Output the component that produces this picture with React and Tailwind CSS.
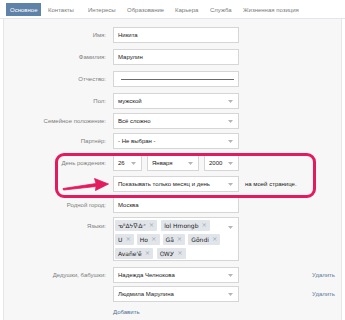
import React from 'react';

const Chevron = () => (
  <svg width="5" height="3" viewBox="0 0 5 3" className="shrink-0">
    <path d="M0 0 L5 0 L2.5 3 Z" fill="#b5b5b5" />
  </svg>
);

const Row = ({ label, className = '', labelClass = 'items-center', labelPad = '', children }) => (
  <div className={`flex ${labelClass} ${className}`}>
    <div className={`w-[102px] text-right text-[6px] text-[#7d7d7d] leading-none whitespace-nowrap ${labelPad}`}>{label}</div>
    <div className="ml-[7px] flex items-center">{children}</div>
  </div>
);

const Input = ({ children, className = 'w-[126px]' }) => (
  <div className={`${className} h-[16px] bg-white border border-[#d6d6d6] flex items-center pl-[4px] text-[6px] text-[#222] leading-none`}>
    {children}
  </div>
);

const Select = ({ children, className = 'w-[126px]' }) => (
  <div className={`${className} h-[16px] bg-white border border-[#d6d6d6] flex items-center justify-between pl-[4px] pr-[5px] text-[6px] text-[#222] leading-none`}>
    <span className="whitespace-nowrap">{children}</span>
    <Chevron />
  </div>
);

const Tag = ({ children }) => (
  <span className="h-[11px] bg-[#e1e5ea] rounded-[1px] flex items-center px-[3px] gap-[3px] text-[6px] text-[#222] leading-none whitespace-nowrap">
    {children}
    <span className="text-[#a0a8b0] text-[6.5px]">×</span>
  </span>
);

export default function App() {
  return (
    <div className="w-[345px] h-[320px] bg-white relative overflow-hidden font-['Liberation_Sans',sans-serif]">
      {/* tabs */}
      <div className="h-[19px] flex items-start pt-[3px] pl-[6px] border-b border-[#e2e5e9] text-[6px] text-[#7a7a7a] leading-none whitespace-nowrap">
        <div className="w-[38px]">
          <div className="w-[35px] h-[13px] bg-[#5f82a8] text-white flex items-center pl-[4px]">Основное</div>
        </div>
        <div className="w-[40px] h-[13px] flex items-center pl-[4px]">Контакты</div>
        <div className="w-[39px] h-[13px] flex items-center pl-[4px]">Интересы</div>
        <div className="w-[48px] h-[13px] flex items-center pl-[4px]">Образование</div>
        <div className="w-[35px] h-[13px] flex items-center pl-[4px]">Карьера</div>
        <div className="w-[33px] h-[13px] flex items-center pl-[4px]">Служба</div>
        <div className="w-[62px] h-[13px] flex items-center pl-[4px]">Жизненная позиция</div>
      </div>

      {/* form panel */}
      <div className="mx-[3px] h-[301px] bg-[#f7f7f7] border-x border-[#e6e6e6]">
        <Row label="Имя:" className="pt-[8px]"><Input>Никита</Input></Row>
        <Row label="Фамилия:" className="mt-[6px]"><Input>Марулин</Input></Row>
        <Row label="Отчество:" className="mt-[6px]">
          <Input>
            <div className="w-[113px] ml-[3px] h-px bg-[#6a6a6a]" />
          </Input>
        </Row>
        <Row label="Пол:" className="mt-[6px]"><Select>мужской</Select></Row>
        <Row label="Семейное положение:" className="mt-[4px]"><Select>Всё сложно</Select></Row>
        <Row label="Партнёр:" className="mt-[4px]"><Select>- Не выбран -</Select></Row>
        <Row label="День рождения:" className="mt-[6px]">
          <div className="flex gap-[5px]">
            <Select className="w-[29px]">26</Select>
            <Select className="w-[52px]">Января</Select>
            <Select className="w-[35px]">2000</Select>
          </div>
        </Row>
        <Row label="" className="mt-[5px]">
          <Select>Показывать только месяц и день</Select>
          <span className="ml-[6px] text-[6px] text-[#222] leading-none whitespace-nowrap">на моей странице.</span>
        </Row>
        <Row label="Родной город:" className="mt-[5px]"><Input>Москва</Input></Row>
        <Row label="Языки:" className="mt-[4px]" labelClass="items-start" labelPad="pt-[6px]">
          <div className="w-[126px] h-[44px] bg-white border border-[#d6d6d6] flex justify-between pl-[1px] pt-[2px] pr-[5px]">
            <div className="flex flex-col gap-[3px] font-['DejaVu_Sans','Noto_Sans',sans-serif]">
              <div className="flex gap-[4px]"><Tag>ᓀᐦᐃᔭᐍᐏᐣ</Tag><Tag>lol Hmongb</Tag></div>
              <div className="flex gap-[3px]"><Tag>U</Tag><Tag>Ho</Tag><Tag>Gã</Tag><Tag>Gõndi</Tag></div>
              <div className="flex gap-[4px]"><Tag>Avañe'ẽ</Tag><Tag>ᏣᎳᎩ</Tag></div>
            </div>
            <div className="pt-[6px]"><Chevron /></div>
          </div>
        </Row>
        <div className="flex items-center mt-[6px] pr-[6px]">
          <Row label="Дедушки, бабушки:"><Select>Надежда Челнокова</Select></Row>
          <span className="ml-auto text-[6px] text-[#5c7a99] leading-none">Удалить</span>
        </div>
        <div className="flex items-center mt-[3px] pr-[6px]">
          <Row label=""><Select>Людмила Марулина</Select></Row>
          <span className="ml-auto text-[6px] text-[#5c7a99] leading-none">Удалить</span>
        </div>
        <div className="ml-[109px] mt-[7px] text-[6px] text-[#4a6f94] leading-none">Добавить</div>
      </div>

      {/* annotation overlay */}
      <div className="absolute left-[55px] top-[153px] w-[261px] h-[45px] border-[3px] border-[#e31a5e] rounded-[9px]" />
      <svg className="absolute left-[60px] top-[177px]" width="50" height="16" viewBox="0 0 50 16">
        <path d="M3 11.5 L36 6.5 L34.5 1.5 L48.5 7 L35.5 13.5 L36 9.5 L3.5 13 Z" fill="#e31a5e" strokeLinejoin="round" stroke="#e31a5e" strokeWidth="0.8" />
      </svg>
    </div>
  );
}
